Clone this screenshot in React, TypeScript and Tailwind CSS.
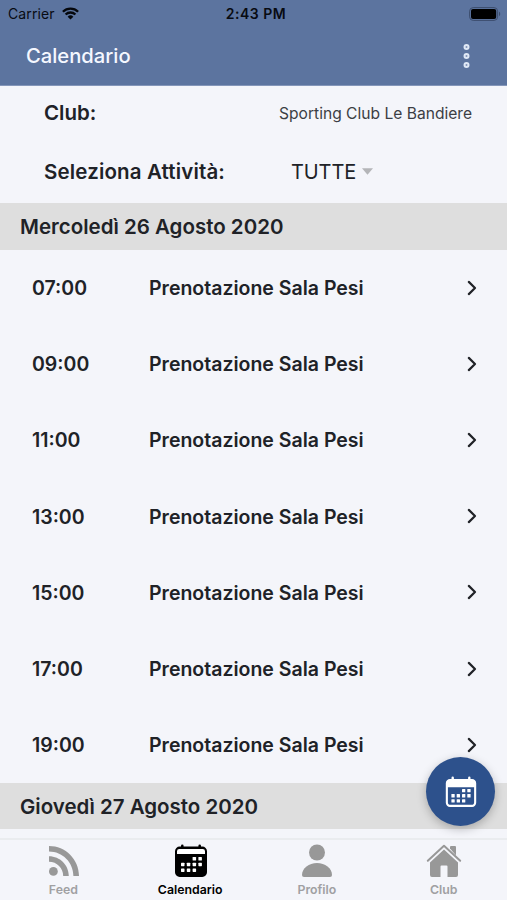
import type { ReactNode } from "react";

interface Tab {
  label: string;
  icon: ReactNode;
  active?: boolean;
}

const slots = ["07:00", "09:00", "11:00", "13:00", "15:00", "17:00", "19:00"];

// column / row of each day mark in the calendar glyphs
const calendarDays = [
  [2, 0],
  [3, 0],
  [0, 1],
  [1, 1],
  [2, 1],
  [3, 1],
  [0, 2],
  [1, 2],
  [2, 2],
];

const WifiIcon = () => (
  <svg width="17" height="13" viewBox="0 0 17 13" fill="none" stroke="#05070c" strokeWidth="2.3">
    <path d="M.9 4.7a10.8 10.8 0 0 1 15.2 0" />
    <path d="M3.6 7.5a7 7 0 0 1 9.8 0" />
    <path d="M8.5 12.6 5.6 9.7a4.1 4.1 0 0 1 5.8 0Z" fill="#05070c" stroke="none" />
  </svg>
);

const BatteryIcon = () => (
  <svg width="32" height="14" viewBox="0 0 32 14">
    <rect x=".6" y=".6" width="28" height="12.8" rx="3.6" fill="none" stroke="#3c4d6d" />
    <rect x="2" y="2" width="25.2" height="10" rx="2" fill="#000" />
    <path d="M30 4.8c1.6.5 1.6 3.9 0 4.4Z" fill="#3c4d6d" />
  </svg>
);

const MoreIcon = () => (
  <svg width="8" height="26" viewBox="0 0 8 26" fill="#7f92b5" stroke="#dfe8f6" strokeWidth="2">
    <circle cx="4.500" cy="4" r="2" />
    <circle cx="4.500" cy="13" r="2" />
    <circle cx="4.500" cy="22" r="2" />
  </svg>
);

const ChevronIcon = () => (
  <svg
    width="10"
    height="16"
    viewBox="0 0 10 16"
    fill="none"
    stroke="#202227"
    strokeWidth="2.2"
    strokeLinecap="round"
    strokeLinejoin="round"
  >
    <path d="M1.8 1.9 8 8l-6.2 6.1" />
  </svg>
);

const FeedIcon = () => (
  <svg width="32" height="32" viewBox="0 0 32 32" fill="#989898">
    <circle cx="5.4" cy="26.4" r="4.4" />
    <path d="M1 11.2c11 0 19.8 8.8 19.8 19.8h-5.6C15.2 23.1 8.9 16.8 1 16.8Z" />
    <path d="M1 1c16.6 0 30 13.4 30 30h-5.6C25.4 17.5 14.5 6.6 1 6.6Z" />
  </svg>
);

const CalendarSolidIcon = () => (
  <svg width="34" height="34" viewBox="0 0 34 34">
    <path d="M7 2.6v-.7a1.300 1.300 0 0 1 2.600 0v.7h14.800v-.7a1.300 1.300 0 0 1 2.600 0v.7h1.300A4.700 4.700 0 0 1 33 7.300v21a4.700 4.700 0 0 1-4.700 4.700H5.700A4.700 4.700 0 0 1 1 28.300v-21a4.700 4.700 0 0 1 4.700-4.700Z" />
    <path d="M3 10V7.3A2.300 2.300 0 0 1 5.300 5h23.400A2.300 2.300 0 0 1 31 7.300V10Z" fill="#fff" />
    {calendarDays.map(([col, row]) => (
      <rect
        key={`${col}-${row}`}
        x={7 + col * 5.8}
        y={13 + row * 5.7}
        width="3.5"
        height="3.5"
        rx=".6"
        fill="#fff"
      />
    ))}
  </svg>
);

const CalendarOutlineIcon = () => (
  <svg width="32" height="32" viewBox="0 0 32 32" fill="#fff">
    <path
      fillRule="evenodd"
      d="M6.500 3V1.800a1.200 1.200 0 0 1 2.400 0V3h14.200V1.800a1.200 1.200 0 0 1 2.400 0V3H27a4.200 4.200 0 0 1 4.200 4.200v19.600A4.200 4.200 0 0 1 27 31H5a4.200 4.200 0 0 1-4.200-4.200V7.200A4.200 4.200 0 0 1 5 3ZM2.900 11.200v15a2.600 2.600 0 0 0 2.600 2.600h21a2.600 2.600 0 0 0 2.600-2.600v-15Z"
    />
    {calendarDays.map(([col, row]) => (
      <rect
        key={`${col}-${row}`}
        x={6.4 + col * 5.3}
        y={12.9 + row * 5.2}
        width="3.3"
        height="3.3"
        rx=".5"
      />
    ))}
  </svg>
);

const ProfileIcon = () => (
  <svg width="32" height="34" viewBox="0 0 32 34" fill="#989898">
    <circle cx="16" cy="8.5" r="8" />
    <path d="M1 31C1 24 8 19 16 19s15 5 15 12q0 2-2 2H3q-2 0-2-2Z" />
  </svg>
);

const HomeIcon = () => (
  <svg width="36" height="34" viewBox="0 0 36 34">
    <path
      d="m1.800 16.800 16.200-15 16.200 15"
      fill="none"
      stroke="#989898"
      strokeWidth="2"
      strokeLinecap="round"
      strokeLinejoin="round"
    />
    <path d="M24 4.500V3q0-1 1-1h4q1 0 1 1v8.400Z" fill="#989898" />
    <path
      d="M18 5.600 32 18.500V31q0 2-2 2h-8.500V22.500q0-1-1-1h-5q-1 0-1 1V33H6q-2 0-2-2V18.500Z"
      fill="#989898"
    />
  </svg>
);

const tabs: Tab[] = [
  { label: "Feed", icon: <FeedIcon /> },
  { label: "Calendario", icon: <CalendarSolidIcon />, active: true },
  { label: "Profilo", icon: <ProfileIcon /> },
  { label: "Club", icon: <HomeIcon /> },
];

const DayHeader = ({ children }: { children: ReactNode }) => (
  <h2 className="flex h-[46.5px] shrink-0 items-center bg-[#dedede] pt-[2px] pl-5 text-[20.5px] font-semibold">
    {children}
  </h2>
);

const SlotRow = ({ time }: { time: string }) => (
  <li className="flex h-[76.2px] items-center pr-[30px] pl-8 text-[19.5px] font-semibold">
    <span className="w-[117px] pt-[2px]">{time}</span>
    <span className="flex-1 pt-[2px]">Prenotazione Sala Pesi</span>
    <ChevronIcon />
  </li>
);

export default function App() {
  return (
    <div className="relative flex h-[900px] w-[507px] flex-col overflow-hidden bg-[#f4f5fa] font-['Inter','Liberation_Sans',sans-serif] whitespace-nowrap text-[#202227]">
      <header className="h-[86px] shrink-0 border-b border-[#8496b9] bg-[#5c749f]">
        <div className="grid h-[27px] grid-cols-3 items-center pr-[6px] pl-[8px] text-[14px] text-[#080b12]">
          <div className="flex items-center gap-[7px] tracking-[0.1px]">
            <span>Carrier</span>
            <WifiIcon />
          </div>
          <span className="pl-[3px] text-center font-semibold tracking-[0.5px]">2:43 PM</span>
          <div className="flex justify-end">
            <BatteryIcon />
          </div>
        </div>
        <div className="flex h-[58px] items-center justify-between pr-[37px] pl-[26px]">
          <h1 className="text-[20.2px] font-medium text-[#f5f8ff]">Calendario</h1>
          <MoreIcon />
        </div>
      </header>

      <section className="h-[117px] shrink-0">
        <div className="flex h-[55px] items-center justify-between pr-[35px] pl-11">
          <span className="text-[20.5px] font-semibold">Club:</span>
          <span className="text-[15.6px] text-[#3c3e44]">Sporting Club Le Bandiere</span>
        </div>
        <div className="flex h-[62px] items-center pl-11">
          <span className="w-[247px] text-[20.5px] font-semibold tracking-[0.15px]">
            Seleziona Attività:
          </span>
          <span className="text-[20px] tracking-[-0.1px]">TUTTE</span>
          <svg className="mb-px ml-[6px]" width="11" height="7" viewBox="0 0 12 7" fill="#b4b5b8">
            <path d="M0 0h12L6 7Z" />
          </svg>
        </div>
      </section>

      <DayHeader>Mercoledì 26 Agosto 2020</DayHeader>
      <ul className="shrink-0">
        {slots.map((time) => (
          <SlotRow key={time} time={time} />
        ))}
      </ul>
      <DayHeader>Giovedì 27 Agosto 2020</DayHeader>

      <button
        type="button"
        aria-label="Prenotazioni"
        className="absolute right-[12px] bottom-[74px] flex size-[69px] items-center justify-center rounded-full bg-[#2d518c] pt-px shadow-[0_3px_10px_rgba(0,0,0,0.25)]"
      >
        <CalendarOutlineIcon />
      </button>

      <nav className="mt-auto grid h-[62px] shrink-0 grid-cols-4 border-t-2 border-[#eaecef] bg-[#f4f5fa]">
        {tabs.map(({ label, icon, active }) => (
          <a
            key={label}
            className={`flex flex-col items-center pt-[4px] text-[12.3px] font-semibold ${
              active ? "text-black" : "text-[#a0a0a2]"
            }`}
          >
            <span className="flex h-[34px] items-center pl-px">{icon}</span>
            <span className="mt-[3px] leading-[18px]">{label}</span>
          </a>
        ))}
      </nav>
    </div>
  );
}
